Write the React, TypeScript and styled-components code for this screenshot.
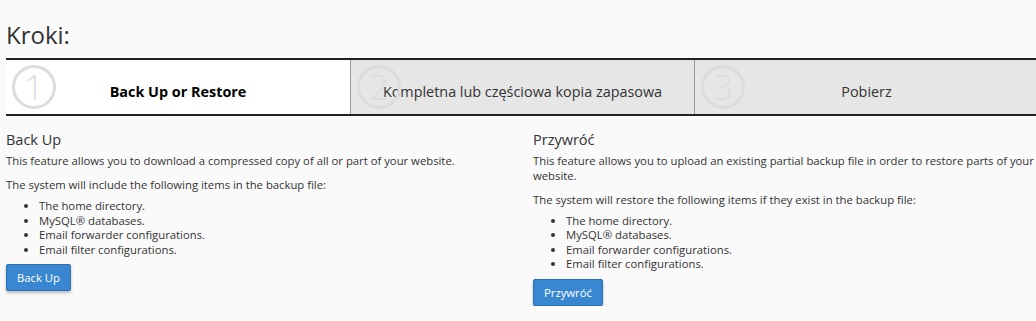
import styled, { createGlobalStyle } from "styled-components";

const GlobalStyle = createGlobalStyle`
   html, body {
      margin: 0;
      padding: 0;
      background: #fafafa;
      overflow: hidden;
   }
   body {
      font-family: "Open Sans", "DejaVu Sans", sans-serif;
      color: #333;
      font-size: 11.3px;
   }
`;

const Page = styled.div`
   padding: 20px 6px 0 6px;
   width: 1036px;
   box-sizing: border-box;
`;

const Title = styled.h1`
   font-size: 24px;
   font-weight: 400;
   margin: 0 0 8px 0;
   line-height: 30px;
   color: #333;
`;

const StepBar = styled.div`
   display: grid;
   grid-template-columns: repeat(3, 344px);
   border-top: 2px solid #222;
   border-bottom: 2px solid #222;
   width: 1032px;
`;

const Step = styled.div<{ $active?: boolean; $first?: boolean }>`
   position: relative;
   height: 54px;
   display: flex;
   align-items: center;
   justify-content: center;
   padding-top: 8px;
   box-sizing: border-box;
   background: ${(p) => (p.$active ? "#fff" : "#e6e6e6")};
   border-left: ${(p) => (p.$first ? "none" : "1px solid #999")};
   font-size: 14.4px;
   font-weight: ${(p) => (p.$active ? 700 : 400)};
   color: ${(p) => (p.$active ? "#000" : "#333")};
`;

const StepNumber = styled.span`
   position: absolute;
   left: 6px;
   top: 5px;
   width: 38px;
   height: 38px;
   border: 3px solid #dcdcdc;
   border-radius: 50%;
   display: flex;
   align-items: center;
   justify-content: center;
   font-size: 34px;
   font-weight: 300;
   color: #dcdcdc;
   line-height: 1;
`;

const Columns = styled.div`
   display: grid;
   grid-template-columns: 527px 503px;
   margin-top: 14px;
`;

const Section = styled.section<{ $last?: boolean }>`
   padding-right: ${(p) => (p.$last ? "0" : "8px")};
`;

const SectionTitle = styled.h2`
   font-size: 14.5px;
   font-weight: 400;
   margin: 0 0 4px 0;
   line-height: 20px;
`;

const Text = styled.p`
   margin: 0 0 9.5px 0;
   line-height: 14.5px;
`;

const List = styled.ul`
   margin: -3px 0 7px 0;
   padding-left: 33px;
   line-height: 14.5px;
`;

const Button = styled.button`
   display: block;
   font-family: inherit;
   font-size: 11.3px;
   color: #fff;
   background: #3a87d1;
   border: 1px solid #2c6fb4;
   border-radius: 2px;
   height: 27px;
   padding: 0 10px;
   box-shadow: 0 2px 3px rgba(0, 0, 0, 0.25);
   cursor: pointer;
`;

const items = [
   "The home directory.",
   "MySQL® databases.",
   "Email forwarder configurations.",
   "Email filter configurations.",
];

const steps = [
   "Back Up or Restore",
   "Kompletna lub częściowa kopia zapasowa",
   "Pobierz",
];

export default function App() {
   return (
      <Page>
         <GlobalStyle />
         <Title>Kroki:</Title>
         <StepBar>
            {steps.map((s, i) => (
               <Step key={s} $active={i === 0} $first={i === 0}>
                  <StepNumber>{i + 1}</StepNumber>
                  {s}
               </Step>
            ))}
         </StepBar>
         <Columns>
            <Section>
               <SectionTitle>Back Up</SectionTitle>
               <Text>
                  This feature allows you to download a compressed copy of all or
                  part of your website.
               </Text>
               <Text>The system will include the following items in the backup file:</Text>
               <List>
                  {items.map((it) => (
                     <li key={it}>{it}</li>
                  ))}
               </List>
               <Button>Back Up</Button>
            </Section>
            <Section $last>
               <SectionTitle>Przywróć</SectionTitle>
               <Text>
                  This feature allows you to upload an existing partial backup file
                  in order to restore parts of your website.
               </Text>
               <Text>
                  The system will restore the following items if they exist in the
                  backup file:
               </Text>
               <List>
                  {items.map((it) => (
                     <li key={it}>{it}</li>
                  ))}
               </List>
               <Button>Przywróć</Button>
            </Section>
         </Columns>
      </Page>
   );
}
